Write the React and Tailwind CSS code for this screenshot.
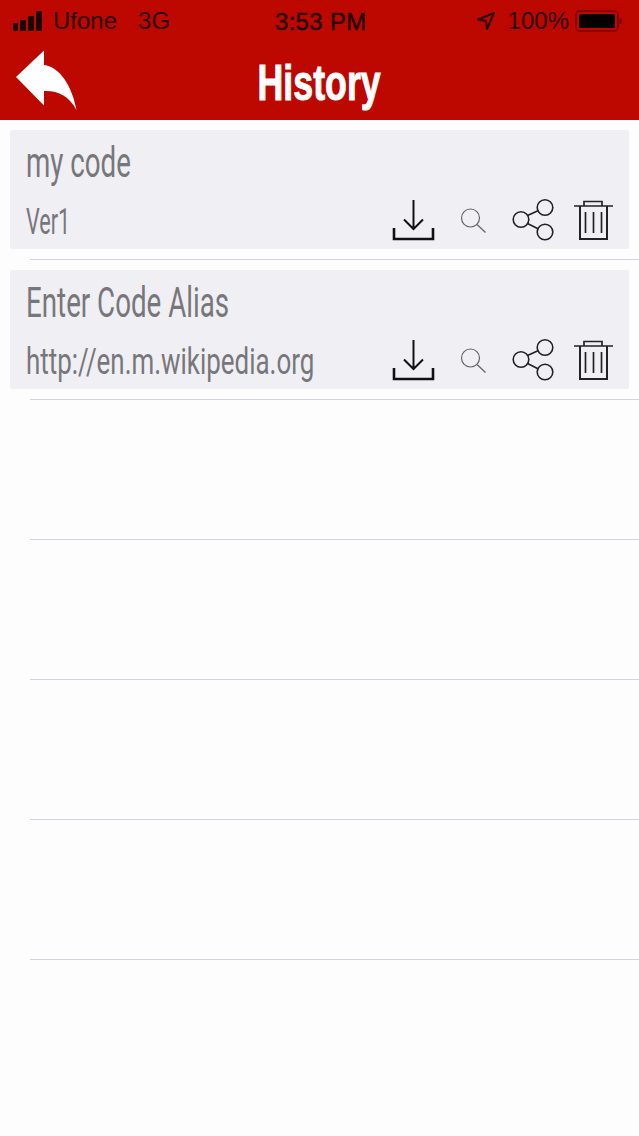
const Bars = () => (
  <div className="flex items-end gap-[2px] w-[32px] h-[20px]">
    <div className="w-[5px] h-[8px] rounded-[1px] bg-[#1d0000]" />
    <div className="w-[6px] h-[11px] rounded-[1px] bg-[#1d0000]" />
    <div className="w-[6px] h-[15px] rounded-[1px] bg-[#1d0000]" />
    <div className="w-[6px] h-[20px] rounded-[1px] bg-[#1d0000]" />
  </div>
);

const Icons = () => (
  <div className="flex items-center">
    <svg width="43" height="44" viewBox="392 198 43 44" fill="none" stroke="#111" strokeWidth="2.2">
      <path d="M413.5 200V229M404 219.5L413.5 229L423 219.5" strokeWidth="2" />
      <path d="M394 228V239H433V228" strokeWidth="2.6" />
    </svg>
    <svg className="ml-[24px]" width="28" height="44" viewBox="459 198 28 44" fill="none" stroke="#666" strokeWidth="1.2">
      <circle cx="470.5" cy="218" r="9" />
      <path d="M477 224.5L485.5 232.5" />
    </svg>
    <svg className="ml-[25px]" width="43" height="44" viewBox="512 198 43 44" fill="none" stroke="#222" strokeWidth="1.6">
      <circle cx="545" cy="207.5" r="7.8" />
      <circle cx="521" cy="219.5" r="7.8" />
      <circle cx="545" cy="232" r="7.8" />
      <path d="M527.5 215.5L538.5 210.5M527.5 223.5L538.5 229" />
    </svg>
    <svg className="ml-[18px]" width="41" height="44" viewBox="573 198 41 44" fill="none" stroke="#222" strokeWidth="1.7">
      <path d="M574 206H613M584 206V201.5H602V206" />
      <path d="M580 206V239H607V206" strokeWidth="2" />
      <path d="M585.5 212V233M593.5 212V233M601.5 212V233" />
    </svg>
  </div>
);

const Row = ({ children }) => (
  <div className="h-[140px] flex flex-col">
    <div className="flex-1 pt-[10px] px-[10px]">{children}</div>
    <div className="ml-[30px] h-px bg-[#d4d0e8]" />
  </div>
);

const Card = ({ title, sub, subScale }) => (
  <div className="h-[119px] bg-[#f0eff4] rounded-[2px] pl-[16px] pr-[15px] flex flex-col text-[#77777b] overflow-hidden [font-family:'Roboto',sans-serif] font-normal">
    <div className="h-[60px] flex items-center pt-[5px]">
      <span className="inline-block origin-left scale-x-[0.66] whitespace-nowrap text-[42px] leading-none">{title}</span>
    </div>
    <div className="flex-1 flex items-center justify-between pt-[1px] min-w-0">
      <span className={`inline-block origin-left whitespace-nowrap text-[36px] leading-none w-0 pt-[3px] ${subScale}`}>{sub}</span>
      <Icons />
    </div>
  </div>
);

export default function App() {
  return (
    <div className="w-[639px] h-[1136px] bg-[#fefdfe] overflow-hidden">
      <header className="h-[120px] bg-[#bd0800] flex flex-col">
        <div className="h-[40px] relative flex items-center pl-[13px] pr-[17px] pt-[2px] text-[#2a0000] text-[24px] [font-family:'Liberation_Sans',sans-serif]">
          <Bars />
          <span className="ml-[8px]">Ufone</span>
          <span className="ml-[21px]">3G</span>
          <span className="ml-auto">100%</span>
          <svg className="absolute left-[476px] top-[11px]" width="20" height="20" viewBox="0 0 20 20" fill="none" stroke="#2a0000" strokeWidth="2">
            <path d="M18 2L2 8.5L10 10L11 18Z" strokeLinejoin="round" />
          </svg>
          <span className="absolute left-[275px] top-[4px] font-medium tracking-[0.3px] text-[#1d0000] [-webkit-text-stroke:0.4px_#1d0000]">3:53 PM</span>
          <svg className="ml-[6px]" width="47" height="22" viewBox="0 0 47 22">
            <rect x="1" y="1" width="42" height="20" rx="4" fill="none" stroke="#7a0303" strokeWidth="1.6" />
            <rect x="4" y="4" width="36" height="14" rx="2" fill="#070000" />
            <rect x="44.5" y="8" width="2" height="6" rx="1" fill="#7a0303" />
          </svg>
        </div>
        <div className="flex-1 relative flex items-center justify-center pt-[6px]">
          <svg className="absolute left-[14px] top-[9px]" width="64" height="62" viewBox="14 49 64 62" fill="#fff">
            <path d="M16 77L44 50.5V65C60 67 72 86 76.5 110C69 96 58 90.5 44 91V105.5Z" />
          </svg>
          <span className="inline-block scale-x-[0.715] text-white font-bold text-[50px] leading-none [font-family:'Liberation_Sans',sans-serif] [-webkit-text-stroke:1px_white] whitespace-nowrap">History</span>
        </div>
      </header>
      <Row><Card title="my code" sub="Ver1" subScale="scale-x-[0.6]" /></Row>
      <Row><Card title="Enter Code Alias" sub="http://en.m.wikipedia.org" subScale="scale-x-[0.72]" /></Row>
      <Row />
      <Row />
      <Row />
      <Row />
    </div>
  );
}
